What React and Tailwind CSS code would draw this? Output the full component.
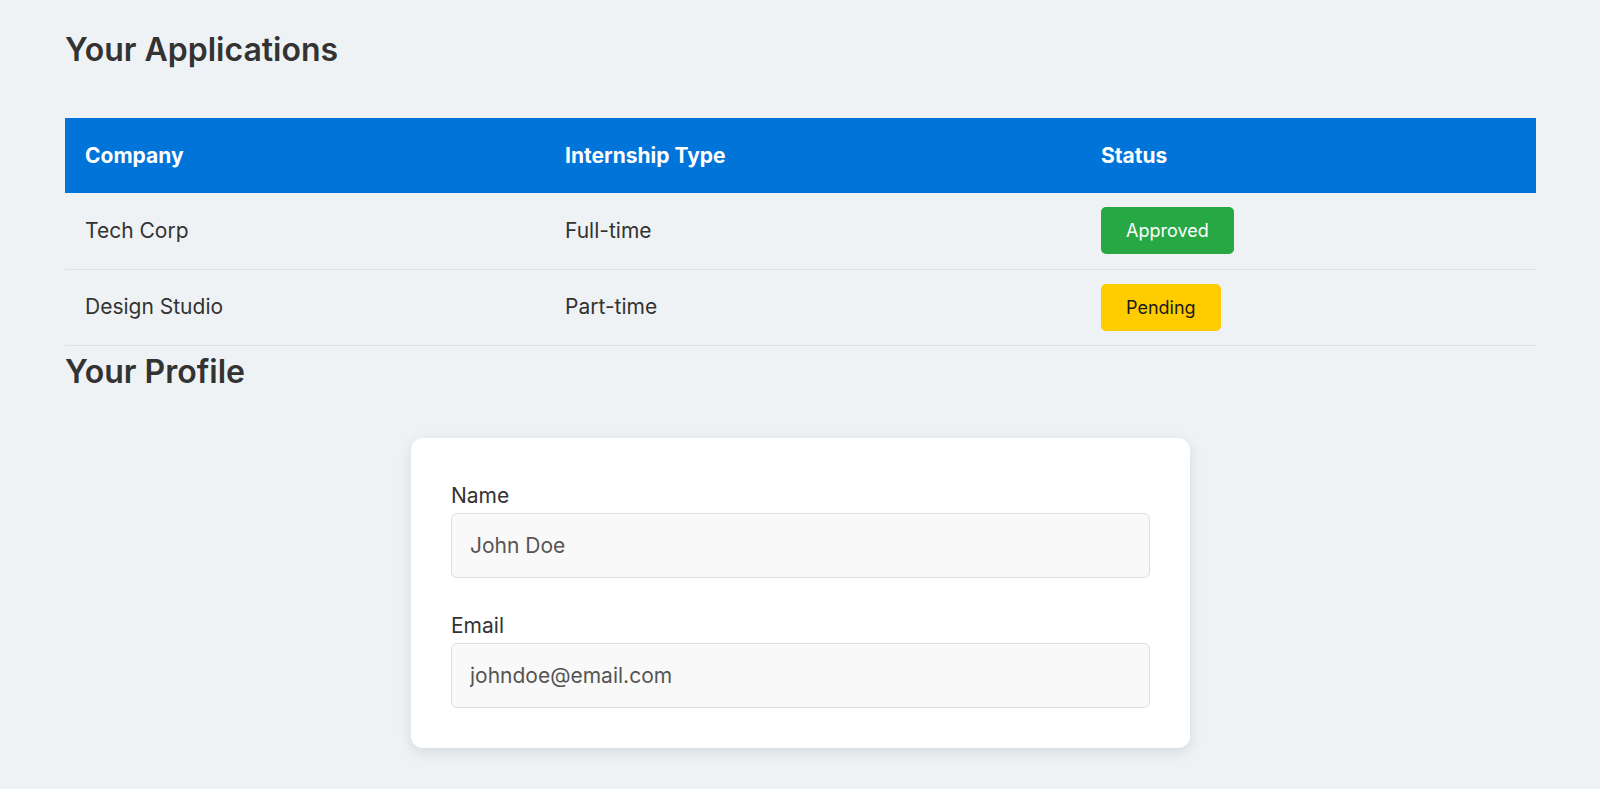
const applications = [
  { company: "Tech Corp", type: "Full-time", status: "Approved" },
  { company: "Design Studio", type: "Part-time", status: "Pending" }
];

function StatusBadge({ status }) {
  const tone =
    status === "Approved"
      ? "bg-[#28a745] text-white"
      : "bg-[#ffcc00] text-[#1a1a1a]";

  return (
    <span className={`inline-flex h-[47px] items-center rounded-[5px] px-[25px] text-[18px] ${tone}`}>
      {status}
    </span>
  );
}

function Field({ label, value, className = "" }) {
  return (
    <div className={className}>
      <label className="block text-[21px] leading-[28px] text-[#333]">{label}</label>
      <input
        type="text"
        defaultValue={value}
        readOnly
        className="mt-[3px] h-[65px] w-full rounded-[6px] border border-[#dddddd] bg-[#f9f9f9] px-[18px] text-[21px] text-[#555] outline-none"
      />
    </div>
  );
}

export default function App() {
  return (
    <main
      className="min-h-screen bg-[#eef2f5] pl-[65px] pr-16 pt-[26px] text-[#333]"
      style={{ fontFamily: "Inter, 'Open Sans', sans-serif" }}
    >
      <h2 className="text-[32px] font-semibold leading-[48px]">Your Applications</h2>

      <table className="mt-[44px] w-full table-fixed border-collapse text-left text-[21px]">
        <colgroup>
          <col className="w-[480px]" />
          <col className="w-[536px]" />
          <col />
        </colgroup>
        <thead>
          <tr className="h-[75px] bg-[#0074d9] text-white">
            <th className="px-5 font-bold">Company</th>
            <th className="px-5 font-bold">Internship Type</th>
            <th className="px-5 font-bold">Status</th>
          </tr>
        </thead>
        <tbody>
          {applications.map((app) => (
            <tr key={app.company} className="h-[76px] border-b border-[#dde2e6]">
              <td className="px-5">{app.company}</td>
              <td className="px-5">{app.type}</td>
              <td className="px-5">
                <StatusBadge status={app.status} />
              </td>
            </tr>
          ))}
        </tbody>
      </table>

      <h2 className="mt-[2px] text-[32px] font-semibold leading-[48px]">Your Profile</h2>

      <section className="mx-auto mt-[42px] w-[779px] rounded-[12px] bg-white px-10 pb-10 pt-[44px] shadow-[0_4px_14px_rgba(0,0,0,0.1)]">
        <Field label="Name" value="John Doe" />
        <Field label="Email" value="johndoe@email.com" className="mt-[34px]" />
      </section>
    </main>
  );
}
